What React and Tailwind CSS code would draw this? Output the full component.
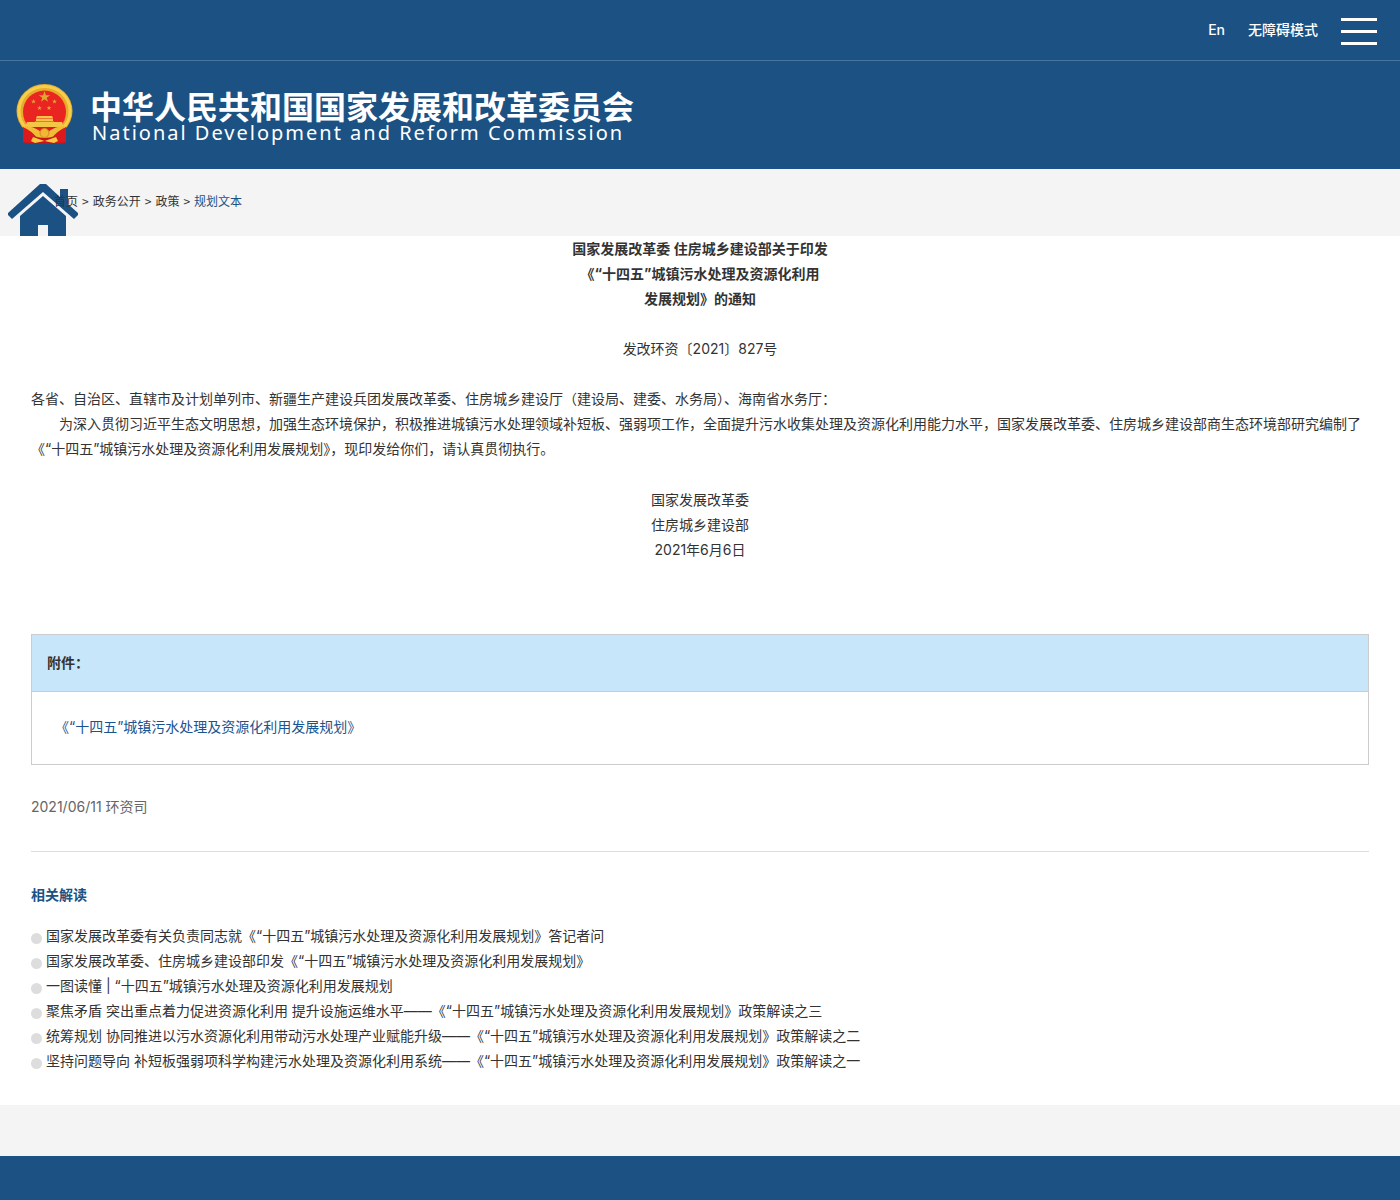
import React from "react";

const related = [
  "国家发展改革委有关负责同志就《“十四五”城镇污水处理及资源化利用发展规划》答记者问",
  "国家发展改革委、住房城乡建设部印发《“十四五”城镇污水处理及资源化利用发展规划》",
  "一图读懂 | “十四五”城镇污水处理及资源化利用发展规划",
  "聚焦矛盾 突出重点着力促进资源化利用 提升设施运维水平——《“十四五”城镇污水处理及资源化利用发展规划》政策解读之三",
  "统筹规划 协同推进以污水资源化利用带动污水处理产业赋能升级——《“十四五”城镇污水处理及资源化利用发展规划》政策解读之二",
  "坚持问题导向 补短板强弱项科学构建污水处理及资源化利用系统——《“十四五”城镇污水处理及资源化利用发展规划》政策解读之一",
];

const STAR = "M0 -1 L0.2245 -0.309 L0.9511 -0.309 L0.3633 0.118 L0.5878 0.809 L0 0.382 L-0.5878 0.809 L-0.3633 0.118 L-0.9511 -0.309 L-0.2245 -0.309 Z";

function Emblem() {
  return (
    <svg viewBox="0 0 58 62" className="h-[62px] w-[58px] shrink-0" role="img" aria-label="国徽">
      <path d="M9 42 L7 58 Q12 61 18 59 L29 60 L40 59 Q46 61 50 58 L48 42 Z" fill="#c9141b" />
      <ellipse cx="28.500" cy="27" rx="28" ry="27" fill="#e6ac2c" />
      <ellipse cx="28.500" cy="27" rx="25.500" ry="24.500" fill="none" stroke="#f8cd4a" strokeWidth="3" />
      <circle cx="28.500" cy="28" r="21.500" fill="#ea2420" />
      <g fill="#e0a832">
        <path d={STAR} transform="translate(28.500 13) scale(6)" />
        <path d={STAR} transform="translate(17.500 17.500) scale(2.600)" />
        <path d={STAR} transform="translate(38.500 17.500) scale(2.600)" />
        <path d={STAR} transform="translate(23.500 24) scale(2.600)" />
        <path d={STAR} transform="translate(33 24) scale(2.600)" />
      </g>
      <path d="M21 32 H36 L37 34 H20 Z M20 34.500 H37 V38 H46 L48 43 H9 L11 38 H20 Z" fill="#f5c645" />
      <path d="M19 37.500 H38" stroke="#d9801f" strokeWidth="1" />
      <path d="M9 43 H48 L44 49 Q36 45 28.500 45 Q21 45 13 49 Z" fill="#d91e1c" />
      <path d="M8 42 Q18 42 25 48 H32 Q39 42 49 42 Q44 51 34 53 H23 Q13 51 8 42 Z" fill="#f0bd38" />
      <circle cx="28.500" cy="49" r="4.500" fill="#f0b932" stroke="#d58a20" strokeWidth="1" />
      <path d="M7 43 Q16 47 21 54 L17 59 L7 58 Z M50 43 Q41 47 36 54 L40 59 L50 58 Z" fill="#dc191d" />
      <path d="M17 53 L28.500 57 L40 53 L42 57 L38 59 L28.500 57 L19 59 L15 57 Z" fill="#f4c942" />
    </svg>
  );
}

function HomeIcon() {
  return (
    <svg viewBox="0 0 70 52" className="absolute left-2 top-[15px] h-[52px] w-[70px]" fill="#1b5283" aria-hidden="true">
      <path d="M32 0 H38 L52 13 V5 H60 V20 L70 29 V31 L66 35 L35 8 L4 35 L0 31 V29 Z" />
      <path d="M35 12 L58 32 V52 H40 V41 H30 V52 H12 V32 Z" />
    </svg>
  );
}

export default function App() {
  return (
    <div className="flex min-h-screen flex-col bg-white font-['Inter','Noto_Sans_CJK_SC',sans-serif] text-sm leading-[25px] text-[#333]" lang="zh-CN">
      <header className="bg-[#1b5283] text-white">
        <div className="flex h-[61px] items-center justify-end gap-[23px] border-b border-[#49759c] pr-[23px]">
          <nav aria-label="语言与辅助" className="flex gap-[23px] pb-0.5 font-medium">
            <a href="#en">En</a>
            <a href="#accessible">无障碍模式</a>
          </nav>
          <button type="button" aria-label="菜单" className="flex w-9 flex-col gap-[9px] pt-0.5">
            <span className="h-[3px] w-full bg-white" />
            <span className="h-[3px] w-full bg-white" />
            <span className="h-[3px] w-full bg-white" />
          </button>
        </div>
        <a href="#home" className="flex h-[108px] items-center gap-4 px-4">
          <Emblem />
          <span className="flex flex-col whitespace-nowrap pt-1">
            <span className="font-['Noto_Sans_CJK_SC',sans-serif] text-[32px] font-bold leading-8">中华人民共和国国家发展和改革委员会</span>
            <span className="pl-0.5 font-['Noto_Sans',sans-serif] text-xl leading-6 tracking-widest">National Development and Reform Commission</span>
          </span>
        </a>
      </header>

      <nav aria-label="面包屑" className="relative h-[67px] bg-[#f4f4f4] pl-[54px] pt-[19px] text-xs leading-[25px]">
        <HomeIcon />
        <ol className="relative flex gap-1 font-['Noto_Sans_CJK_SC',sans-serif]">
          <li><a href="#home">首页</a></li>
          <li aria-hidden="true">&gt;</li>
          <li><a href="#open">政务公开</a></li>
          <li aria-hidden="true">&gt;</li>
          <li><a href="#policy">政策</a></li>
          <li aria-hidden="true">&gt;</li>
          <li><a href="#plan" className="text-[#1b5283]">规划文本</a></li>
        </ol>
      </nav>

      <main className="px-[31px] pb-8">
        <article>
          <h1 className="text-center font-bold">
            国家发展改革委 住房城乡建设部关于印发<br />
            《“十四五”城镇污水处理及资源化利用<br />
            发展规划》的通知
          </h1>
          <p className="mt-[25px] text-center">发改环资〔2021〕827号</p>
          <p className="mt-[25px]">各省、自治区、直辖市及计划单列市、新疆生产建设兵团发展改革委、住房城乡建设厅（建设局、建委、水务局）、海南省水务厅：</p>
          <p className="indent-7">为深入贯彻习近平生态文明思想，加强生态环境保护，积极推进城镇污水处理领域补短板、强弱项工作，全面提升污水收集处理及资源化利用能力水平，国家发展改革委、住房城乡建设部商生态环境部研究编制了《“十四五”城镇污水处理及资源化利用发展规划》，现印发给你们，请认真贯彻执行。</p>
          <p className="mt-[26px] text-center">国家发展改革委<br />住房城乡建设部<br />2021年6月6日</p>
        </article>

        <section className="mt-[72px] border border-[#ccc]">
          <h2 className="border-b border-[#ccc] bg-[#c7e6fa] px-[15px] py-4 font-bold leading-6">附件：</h2>
          <p className="px-[23px] pb-[25px] pt-[22px]"><a href="#attachment" className="text-[#1a5490]">《“十四五”城镇污水处理及资源化利用发展规划》</a></p>
        </section>

        <p className="mt-[29px] border-b border-[#ddd] pb-8 text-[#666]">2021/06/11 环资司</p>

        <section className="mt-[30px]">
          <h2 className="font-bold text-[#1b5283]">相关解读</h2>
          <ul className="mt-4">
            {related.map((title) => (
              <li key={title} className="flex items-center gap-1">
                <span className="mt-[5px] size-[11px] shrink-0 rounded-full bg-[#ddd]" />
                <a href="#article">{title}</a>
              </li>
            ))}
          </ul>
        </section>
      </main>

      <div className="h-[51px] bg-[#f4f4f4]" />
      <footer className="min-h-11 grow bg-[#1b5283]" />
    </div>
  );
}
